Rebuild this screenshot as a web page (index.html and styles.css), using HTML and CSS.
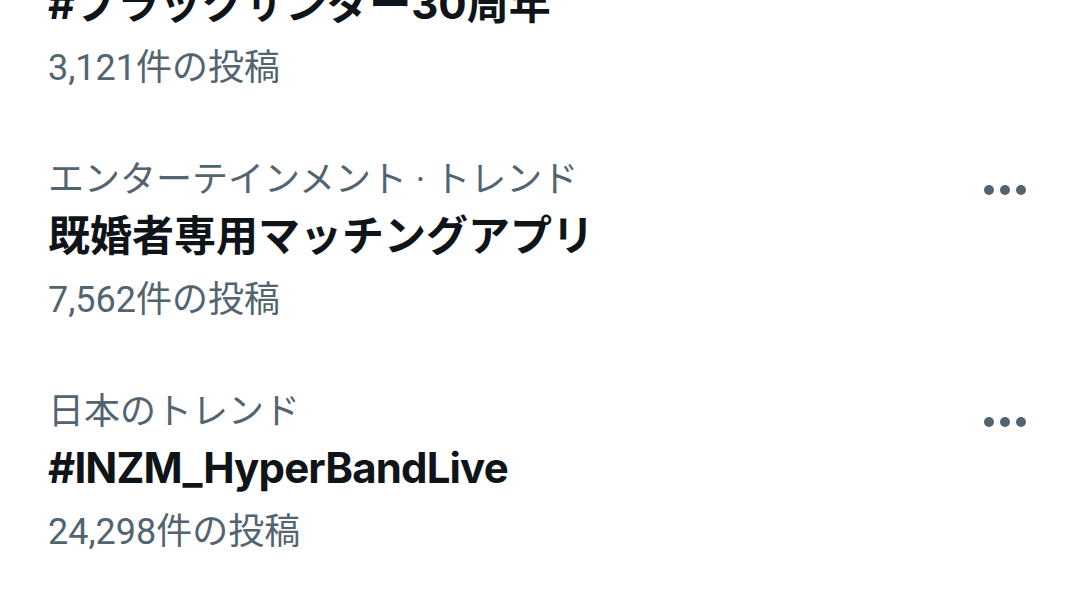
FILE: index.html
```html
<!DOCTYPE html>
<html lang="ja">
<head>
<meta charset="utf-8">
<link rel="stylesheet" href="styles.css">
</head>
<body>
<div class="list">
  <div class="item item-cut">
    <div class="text">
      <div class="title">#ブラックサンダー30周年</div>
      <div class="count">3,121件の投稿</div>
    </div>
  </div>
  <div class="item">
    <div class="text">
      <div class="cat">エンターテインメント · トレンド</div>
      <div class="title">既婚者専用マッチングアプリ</div>
      <div class="count">7,562件の投稿</div>
    </div>
    <div class="more"><span></span><span></span><span></span></div>
  </div>
  <div class="item">
    <div class="text">
      <div class="cat">日本のトレンド</div>
      <div class="title title-latin">#INZM_HyperBandLive</div>
      <div class="count">24,298件の投稿</div>
    </div>
    <div class="more"><span></span><span></span><span></span></div>
  </div>
</div>
</body>
</html>
```

FILE: styles.css
```css
html, body {
  margin: 0;
  padding: 0;
  background: #ffffff;
  overflow: hidden;
}
body {
  width: 1080px;
  height: 608px;
  font-family: Roboto, "Noto Sans CJK JP", sans-serif;
}
.list {
  display: flex;
  flex-direction: column;
}
.item {
  display: flex;
  justify-content: space-between;
  align-items: flex-start;
  padding: 32px 54px 32px 48px;
}
.item-cut {
  margin-top: -60px;
}
.text {
  display: flex;
  flex-direction: column;
}
.cat {
  font-size: 36px;
  line-height: 48px;
  color: #536471;
  white-space: nowrap;
}
.title {
  font-family: Inter, "Noto Sans CJK JP", sans-serif;
  font-size: 42px;
  line-height: 64px;
  font-weight: 700;
  color: #0f1419;
  white-space: nowrap;
}
.title-latin {
  letter-spacing: -0.85px;
}
.count {
  margin-top: 8px;
  font-size: 36px;
  line-height: 48px;
  color: #536471;
  white-space: nowrap;
}
.more {
  display: flex;
  gap: 6px;
  margin-top: 29px;
}
.more span {
  width: 10px;
  height: 10px;
  border-radius: 50%;
  background: #536471;
}
```
